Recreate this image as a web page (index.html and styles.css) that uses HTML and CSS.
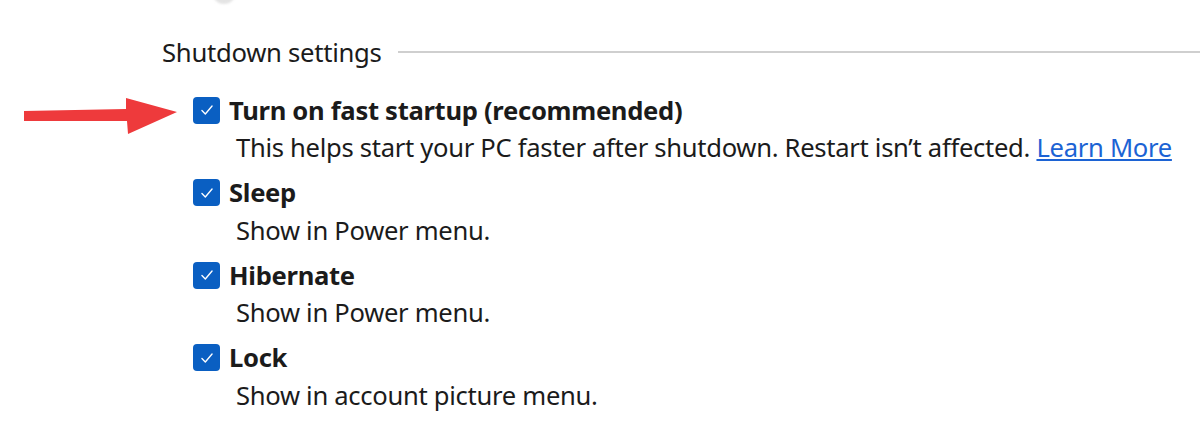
FILE: index.html
```html
<!DOCTYPE html>
<html lang="en">
<head>
    <meta charset="UTF-8">
    <title>Shutdown settings</title>
    <link rel="stylesheet" href="styles.css">
</head>
<body>
    <div class="top-knob"></div>
    <div class="panel">
        <div class="group-header">
            <span class="group-title">Shutdown settings</span>
            <span class="group-line"></span>
        </div>

        <div class="option">
            <svg class="arrow" width="160" height="40" viewBox="0 0 160 40">
                <path d="M2 17 L104 15 L104 4 L155 18 L106 40 L105 27 L2 27 Z" fill="#ee3a3c"/>
            </svg>
            <div class="option-title">
                <span class="check"><svg width="18" height="18" viewBox="0 0 16 16"><path d="M3.5 8.5 L6.5 11.5 L12.5 4.5" fill="none" stroke="#fff" stroke-width="1.2" stroke-linecap="round" stroke-linejoin="round"/></svg></span>
                <span>Turn on fast startup (recommended)</span>
            </div>
            <div class="option-desc">This helps start your PC faster after shutdown. Restart isn’t affected. <a href="#">Learn More</a></div>
        </div>

        <div class="option">
            <div class="option-title">
                <span class="check"><svg width="18" height="18" viewBox="0 0 16 16"><path d="M3.5 8.5 L6.5 11.5 L12.5 4.5" fill="none" stroke="#fff" stroke-width="1.2" stroke-linecap="round" stroke-linejoin="round"/></svg></span>
                <span>Sleep</span>
            </div>
            <div class="option-desc">Show in Power menu.</div>
        </div>

        <div class="option">
            <div class="option-title">
                <span class="check"><svg width="18" height="18" viewBox="0 0 16 16"><path d="M3.5 8.5 L6.5 11.5 L12.5 4.5" fill="none" stroke="#fff" stroke-width="1.2" stroke-linecap="round" stroke-linejoin="round"/></svg></span>
                <span>Hibernate</span>
            </div>
            <div class="option-desc">Show in Power menu.</div>
        </div>

        <div class="option">
            <div class="option-title">
                <span class="check"><svg width="18" height="18" viewBox="0 0 16 16"><path d="M3.5 8.5 L6.5 11.5 L12.5 4.5" fill="none" stroke="#fff" stroke-width="1.2" stroke-linecap="round" stroke-linejoin="round"/></svg></span>
                <span>Lock</span>
            </div>
            <div class="option-desc">Show in account picture menu.</div>
        </div>
    </div>
</body>
</html>
```

FILE: styles.css
```css
body {
    margin: 0;
    background: #fff;
    color: #1b1b1b;
    font-family: 'Noto Sans', 'Open Sans', sans-serif;
    overflow: hidden;
    position: relative;
    height: 426px;
}
.top-knob {
    position: absolute;
    left: 212px;
    top: -20px;
    width: 24px;
    height: 24px;
    border-radius: 50%;
    background: #e4e4e4;
    filter: blur(1px);
}
.panel {
    padding: 33px 0 0 162px;
}
.group-header {
    display: flex;
    align-items: center;
    height: 38px;
}
.group-title {
    font-size: 25.7px;
    letter-spacing: -0.3px;
}
.group-line {
    flex: 1;
    height: 2px;
    background: #cfcfcf;
    margin-left: 16px;
}
.option {
    position: relative;
    margin-top: 20px;
    padding-left: 31px;
}
.option + .option {
    margin-top: 6.5px;
}
.option-title {
    display: flex;
    align-items: center;
    height: 38px;
    font-size: 25.6px;
    font-weight: bold;
    letter-spacing: -0.3px;
}
.check {
    width: 27px;
    height: 27px;
    border-radius: 4px;
    background: #0a5fc2;
    display: flex;
    align-items: center;
    justify-content: center;
    margin-right: 9px;
}
.option-desc {
    height: 38px;
    line-height: 38px;
    padding-left: 43px;
    font-size: 25.6px;
    letter-spacing: -0.3px;
}
.option-desc a {
    color: #1c63d4;
    text-decoration: underline;
}
.arrow {
    position: absolute;
    left: -140px;
    top: 3px;
}
```
